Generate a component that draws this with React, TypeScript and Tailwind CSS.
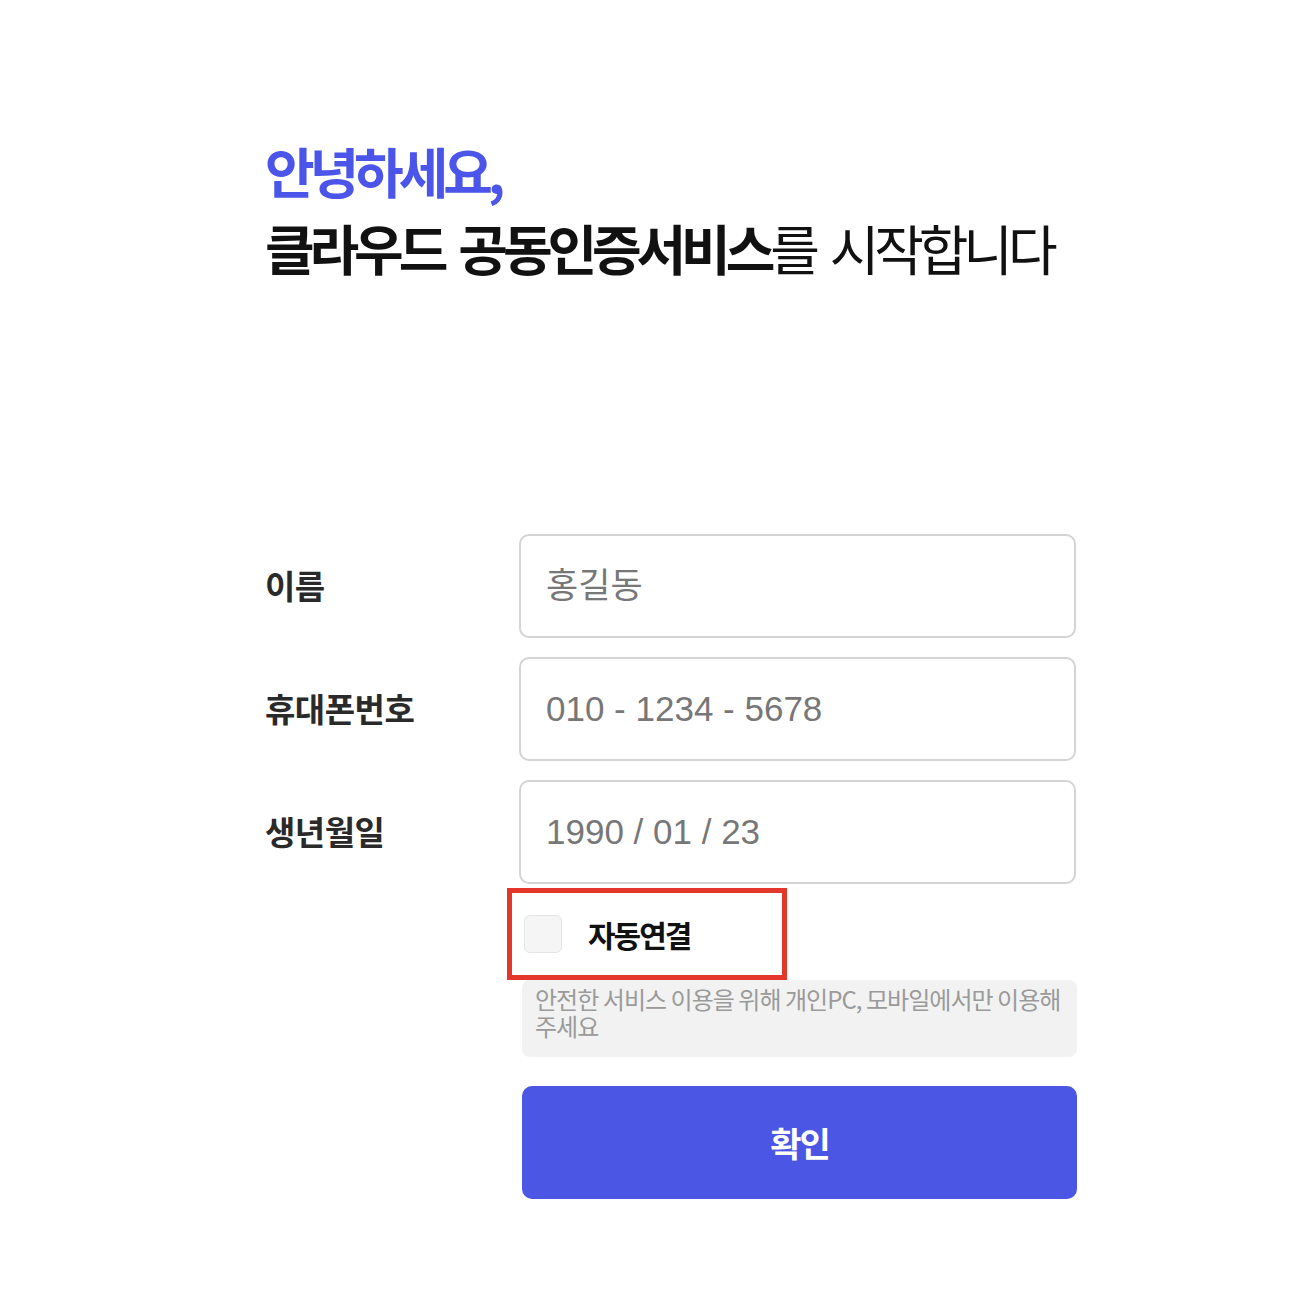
const ko = { fontFamily: '"Noto Sans CJK KR", "Noto Sans", sans-serif' };
const mixed = { fontFamily: '"Liberation Sans", "Noto Sans CJK KR", sans-serif' };

const Field = ({ label, placeholder }: { label: string; placeholder: string }) => (
  <div className="flex items-center">
    <label className="w-[254px] text-[33px] font-bold text-[#2a2a2a] tracking-[-0.5px]" style={ko}>
      {label}
    </label>
    <input
      className="w-[557px] h-[104px] rounded-[10px] border-2 border-[#d4d4d4] bg-white px-[25px] text-[35px] text-[#333] placeholder:text-[#777] outline-none"
      style={mixed}
      placeholder={placeholder}
    />
  </div>
);

export default function App() {
  return (
    <div className="min-h-[1290px] w-[1290px] bg-white pl-[265px] pt-[132px]" style={ko}>
      <h1 className="text-[54px] leading-[77px] tracking-[-0.095em] [word-spacing:8px]">
        <span className="block font-bold text-[#4b55ea]">안녕하세요,</span>
        <span className="block text-[#111]">
          <span className="font-bold">클라우드 공동인증서비스</span>
          <span className="font-normal">를 시작합니다</span>
        </span>
      </h1>

      <form className="mt-[248px] flex flex-col gap-[19px]" onSubmit={(e) => e.preventDefault()}>
        <Field label="이름" placeholder="홍길동" />
        <Field label="휴대폰번호" placeholder="010 - 1234 - 5678" />
        <Field label="생년월일" placeholder="1990 / 01 / 23" />
      </form>

      <div className="ml-[254px] flex flex-col">
        <div className="-ml-[12px] mt-[4px] flex h-[92px] w-[280px] items-center gap-[26px] border-[5px] border-[#e3372b] pl-[12px]">
          <span className="h-[38px] w-[38px] rounded-[6px] border border-[#e4e4e4] bg-[#f5f5f5]" />
          <span className="text-[30px] font-bold tracking-[-2px] text-[#111]">자동연결</span>
        </div>
        <div className="ml-[3px] h-[77px] w-[555px] rounded-[8px] bg-[#f2f2f2] px-[13px] pt-[5px] text-[24px] leading-[27px] tracking-[-0.04em] text-[#9a9a9a]">
          안전한 서비스 이용을 위해 개인PC, 모바일에서만 이용해
          <br />
          주세요
        </div>
        <button
          type="button"
          className="ml-[3px] mt-[29px] h-[113px] w-[555px] rounded-[10px] bg-[#4b56e4] text-[34px] font-bold tracking-[-2px] text-white"
        >
          확인
        </button>
      </div>
    </div>
  );
}
